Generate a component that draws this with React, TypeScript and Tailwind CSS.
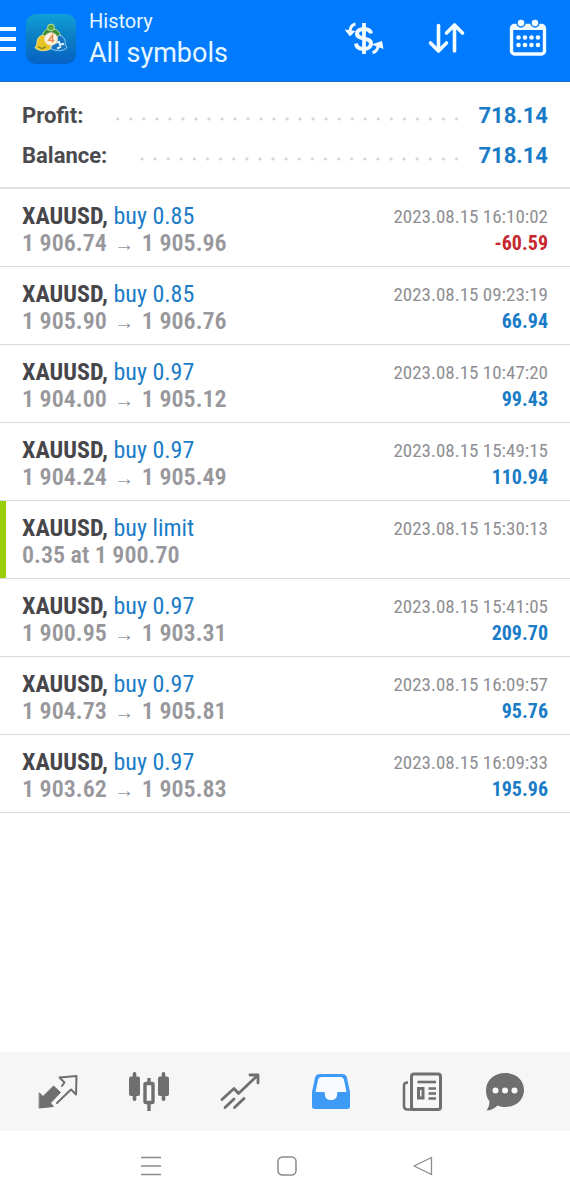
type Deal = {
  id: number;
  symbol: string;
  action: string;
  from?: string;
  to?: string;
  note?: string;
  time: string;
  profit?: string;
};

const DEALS: Deal[] = [
  { id: 1, symbol: "XAUUSD", action: "buy 0.85", from: "1 906.74", to: "1 905.96", time: "2023.08.15 16:10:02", profit: "-60.59" },
  { id: 2, symbol: "XAUUSD", action: "buy 0.85", from: "1 905.90", to: "1 906.76", time: "2023.08.15 09:23:19", profit: "66.94" },
  { id: 3, symbol: "XAUUSD", action: "buy 0.97", from: "1 904.00", to: "1 905.12", time: "2023.08.15 10:47:20", profit: "99.43" },
  { id: 4, symbol: "XAUUSD", action: "buy 0.97", from: "1 904.24", to: "1 905.49", time: "2023.08.15 15:49:15", profit: "110.94" },
  { id: 5, symbol: "XAUUSD", action: "buy limit", note: "0.35 at 1 900.70", time: "2023.08.15 15:30:13" },
  { id: 6, symbol: "XAUUSD", action: "buy 0.97", from: "1 900.95", to: "1 903.31", time: "2023.08.15 15:41:05", profit: "209.70" },
  { id: 7, symbol: "XAUUSD", action: "buy 0.97", from: "1 904.73", to: "1 905.81", time: "2023.08.15 16:09:57", profit: "95.76" },
  { id: 8, symbol: "XAUUSD", action: "buy 0.97", from: "1 903.62", to: "1 905.83", time: "2023.08.15 16:09:33", profit: "195.96" },
];

const SUMMARY = [
  { label: "Profit:", value: "718.14" },
  { label: "Balance:", value: "718.14" },
];

function MenuIcon() {
  return (
    <svg width="16" height="26" viewBox="0 0 16 26" fill="#f2fbff" aria-hidden="true">
      <path d="M0 1h16v4H0zM0 11h16v4H0zM0 21h16v4H0z" />
    </svg>
  );
}

function AppLogo() {
  return (
    <svg width="50" height="50" viewBox="0 0 50 52" preserveAspectRatio="none" aria-hidden="true">
      <defs>
        <linearGradient id="tile" x1="0" y1="0" x2="0" y2="1">
          <stop offset="0" stopColor="#109fd6" />
          <stop offset="0.45" stopColor="#0b7fc4" />
          <stop offset="1" stopColor="#0661c4" />
        </linearGradient>
      </defs>
      <rect width="50" height="52" rx="10" fill="url(#tile)" />
      <path d="M25 15c6 0 10 5 10 10l-10 5-9-5c0-5 3-10 9-10Z" fill="#3f8f3a" stroke="#b7dc8a" strokeWidth="1" />
      <circle cx="25" cy="14" r="3.500" fill="#5aa53c" stroke="#c4e2a4" strokeWidth="1" />
      <path d="M17 22c-5 1-6 5-6 8 0 2-1 4-2 5 4 4 11 4 16 1l-1-9Z" fill="#e8c425" stroke="#f6e88c" strokeWidth="1" />
      <path d="M33 22c5 1 7 6 6 9l2 4c-4 4-11 4-16 1l2-8Z" fill="#1673c4" stroke="#8fd0f0" strokeWidth="1" />
      <path d="m29 30 4-1 1 3 4-1M31 36l4-2" fill="none" stroke="#d6f2ff" strokeWidth="2" />
      <path d="m12 34 4 2 4-2" fill="none" stroke="#8b8a20" strokeWidth="1.500" />
      <circle cx="25" cy="26" r="6.500" fill="#fff6e6" stroke="#f0d6b0" strokeWidth="1" />
      <path d="M26.500 30v-8l-4 5.500h6" fill="none" stroke="#e58a4a" strokeWidth="1.500" />
    </svg>
  );
}

function CurrencyIcon() {
  return (
    <svg width="40" height="40" viewBox="0 0 40 40" fill="none" stroke="#f2fbff" aria-hidden="true">
      <path d="M27 14.500c-.5-3-3-4.500-7-4.500-4 0-7 1.800-7 4.800 0 6.400 14 3.200 14 9.700 0 3.200-3 5.500-7.500 5.500s-7-1.700-7.500-5.500" strokeWidth="4" />
      <path d="M20 4v31" strokeWidth="3.800" />
      <path d="M11.500 5C8.500 5.500 6.500 8 6 12" strokeWidth="3" />
      <path d="M.5 10.500 11.500 12 6 17.500Z" fill="#f2fbff" stroke="none" />
      <path d="M28.500 33.500c3.500-.5 5.500-3.500 6-8" strokeWidth="3" />
      <path d="m27.500 25.500 10.500-3.500 1.500 8Z" fill="#f2fbff" stroke="none" />
    </svg>
  );
}

function SortIcon() {
  return (
    <svg width="40" height="40" viewBox="0 0 40 40" fill="none" stroke="#f2fbff" strokeWidth="3.600" strokeLinecap="round" strokeLinejoin="round" aria-hidden="true">
      <path d="M12.500 6.500v25M4.500 24l8 8 8-8" />
      <path d="M28.500 32V6.500M20.500 14l8-8 8 8" />
    </svg>
  );
}

function CalendarIcon() {
  return (
    <svg width="40" height="40" viewBox="0 0 40 40" aria-hidden="true">
      <rect x="3.500" y="6.500" width="33" height="28.500" rx="3" fill="none" stroke="#f2fbff" strokeWidth="3.400" />
      <path d="M3 6h34v5H3z" fill="#f2fbff" />
      <g fill="#f2fbff" stroke="#0a7cf5" strokeWidth="1.500">
        <circle cx="13" cy="4" r="4" />
        <circle cx="27" cy="4" r="4" />
      </g>
      <g fill="#f2fbff">
        {[10.5, 17, 23.5, 30].map((x) => (
          <g key={x}>
            <circle cx={x} cy="18.500" r="2.300" />
            <circle cx={x} cy="26" r="2.300" />
          </g>
        ))}
      </g>
    </svg>
  );
}

function QuotesIcon() {
  return (
    <svg width="40" height="40" viewBox="0 0 40 40" stroke="#6f6f6f" strokeLinejoin="round" strokeLinecap="round" aria-hidden="true">
      <path d="M1.500 21 5 24.500 15.500 14 22.500 20.500 12.500 31 15.500 34.500 1.500 36Z" fill="#6f6f6f" />
      <path d="m24 14 2.500-3.500-5-5L38.500 4 38 22.500 33 17.500 19 31" fill="none" strokeWidth="2" />
    </svg>
  );
}

function ChartIcon() {
  return (
    <svg width="40" height="40" viewBox="0 0 40 40" fill="#6f6f6f" aria-hidden="true">
      <rect x="0" y="4.500" width="11" height="19.500" rx="2" />
      <rect x="3.700" y="0" width="3.600" height="29" rx="1.700" />
      <rect x="29" y="4.500" width="11" height="19.500" rx="2" />
      <rect x="32.700" y="0" width="3.600" height="29" rx="1.700" />
      <rect x="16" y="11.500" width="8" height="19" rx="1" fill="none" stroke="#6f6f6f" strokeWidth="3.400" />
      <path d="M18.300 6h3.400v5h-3.400zM18.300 31h3.400v8h-3.400z" />
    </svg>
  );
}

function TradeIcon() {
  return (
    <svg width="40" height="40" viewBox="0 0 40 40" fill="none" stroke="#6f6f6f" strokeWidth="2.800" strokeLinecap="round" strokeLinejoin="round" aria-hidden="true">
      <path d="M2 27.500 14 16.500l4.500 5L37 4" />
      <path d="M30 3h8v8" />
      <path d="M5 35.500l9-8.500M14.500 35.500 24 26.500" />
    </svg>
  );
}

function HistoryIcon() {
  return (
    <svg width="40" height="40" viewBox="0 0 40 40" aria-hidden="true">
      <path d="M9 2h22c2.500 0 4 1 4.800 3L39 20v14.500c0 1.500-1 2.500-2.500 2.500h-33C2 37 1 36 1 34.500V20L4.200 5C5 3 6.500 2 9 2Z" fill="#3d9af5" />
      <path d="M11 5h18c2.500 0 3.500 1 4 3L35.500 20h-8c-1.500 0-1.500 1-1.500 3 0 3-2.500 5-6 5s-6-2-6-5c0-2 0-3-1.500-3h-8L7 8c.5-2 1.500-3 4-3Z" fill="#f8fbff" />
    </svg>
  );
}

function NewsIcon() {
  return (
    <svg width="40" height="40" viewBox="0 0 40 40" fill="none" stroke="#6f6f6f" aria-hidden="true">
      <rect x="9.500" y="2" width="29" height="35.500" rx="2.500" strokeWidth="3" />
      <path d="M6 10.500c-3 0-4 1-4 3.500v20c0 2.500 1 3.500 3.500 3.500H12c-2 0-2.500-1.500-2.500-3.500" strokeWidth="2.600" />
      <path d="M15.500 10h18.500" strokeWidth="2.600" />
      <rect x="16.500" y="16.500" width="4.500" height="9.500" strokeWidth="3" />
      <path d="M26.500 16.500H34M26.500 21.500H34M26.500 26.500H34" strokeWidth="2.600" />
    </svg>
  );
}

function ChatIcon() {
  return (
    <svg width="40" height="40" viewBox="0 0 40 40" aria-hidden="true">
      <path d="M20.500 1C31 1 39 8 39 18S31 35 20.500 35c-3 0-5.500-.6-7.800-1.600C9.500 36.500 5 38.500 1.500 38.500c2.200-3 3.200-6.500 2.800-9.500C2 26 1 22.500 1 18.500 1 8 9.500 1 20.500 1Z" fill="#6f6f6f" />
      <g fill="#f8f8f8">
        <circle cx="10.500" cy="18.500" r="3" />
        <circle cx="20" cy="18.500" r="3" />
        <circle cx="29.500" cy="18.500" r="3" />
      </g>
    </svg>
  );
}

const TABS = [
  { label: "Quotes", icon: <QuotesIcon /> },
  { label: "Charts", icon: <ChartIcon /> },
  { label: "Trade", icon: <TradeIcon /> },
  { label: "History", icon: <HistoryIcon /> },
  { label: "News", icon: <NewsIcon /> },
  { label: "Messages", icon: <ChatIcon /> },
];

function Header() {
  return (
    <header className="flex items-center border-b border-[#1c6fc4] bg-[#007bff] pt-[5px] pr-[22px] pb-2 text-[#e6f7ff]">
      <button type="button" aria-label="Menu">
        <MenuIcon />
      </button>
      <div className="ml-2.5 shrink-0">
        <AppLogo />
      </div>
      <div className="ml-[13px] flex-1 py-0.5 font-['Roboto',sans-serif]">
        <p className="text-[20px] leading-7">History</p>
        <h1 className="text-[27px] leading-9">All symbols</h1>
      </div>
      <div className="flex gap-[42px]">
        <button type="button" aria-label="Symbols">
          <CurrencyIcon />
        </button>
        <button type="button" aria-label="Sort">
          <SortIcon />
        </button>
        <button type="button" aria-label="Period">
          <CalendarIcon />
        </button>
      </div>
    </header>
  );
}

function DealRow({ deal }: { deal: Deal }) {
  const pending = !deal.profit;

  return (
    <li className="border-b border-[#d9d9d9]">
      <div
        className={`flex justify-between border-l-[6px] pt-3.5 pr-[22px] pb-[9px] pl-4 leading-[27px] ${
          pending ? "border-[#9acd0a]" : "border-transparent"
        }`}
      >
        <div className="text-[24px] leading-[27px]">
          <p className="font-bold text-[#47474b]">
            {deal.symbol},{" "}
            <span className="font-normal text-[#1a7cc7]">{deal.action}</span>
          </p>
          <p className="font-semibold text-[#98989c]">
            {deal.note ?? (
              <>
                {deal.from}{" "}
                <span className="mx-0.5 font-['Liberation_Sans',sans-serif] text-[20px] leading-none font-normal">→</span>{" "}
                {deal.to}
              </>
            )}
          </p>
        </div>
        <div className="text-right">
          <p className="text-[19px] leading-[27px] text-[#8f8f93]">{deal.time}</p>
          {deal.profit ? (
            <p
              className={`text-[20px] leading-[27px] font-bold ${
                deal.profit.startsWith("-") ? "text-[#c5272d]" : "text-[#1a7cc7]"
              }`}
            >
              {deal.profit}
            </p>
          ) : null}
        </div>
      </div>
    </li>
  );
}

export default function App() {
  return (
    <div className="flex min-h-screen flex-col bg-white font-['Roboto_Condensed','Liberation_Sans_Narrow',sans-serif]">
      <Header />

      <main className="flex-1">
        <dl className="border-b-2 border-[#e2e2e2] px-[22px] pt-3.5 pb-[11px] font-['Roboto',sans-serif] text-[22px] leading-10 font-bold">
          {SUMMARY.map((item) => (
            <div key={item.label} className="flex items-center">
              <dt className="text-[#4b4b4f]">{item.label}</dt>
              <dd className="flex flex-1 items-center text-[#1a7cc7]">
                <span className="mt-1.5 mr-4 ml-7 h-1 flex-1 bg-[radial-gradient(circle,#d4d4d4_1px,transparent_2px)] bg-[length:13px_4px] bg-right bg-repeat-round" />
                {item.value}
              </dd>
            </div>
          ))}
        </dl>

        <ul>
          {DEALS.map((deal) => (
            <DealRow key={deal.id} deal={deal} />
          ))}
        </ul>
      </main>

      <nav className="grid h-[79px] grid-cols-[repeat(5,6fr)_5fr] items-center bg-[#f6f6f6] pr-[27px] pl-[13px]">
        {TABS.map((tab) => (
          <button key={tab.label} type="button" aria-label={tab.label} className="flex justify-center">
            {tab.icon}
          </button>
        ))}
      </nav>

      <div className="flex h-[69px] items-center justify-center gap-[116px] pl-1">
        <button type="button" aria-label="Recent apps">
          <svg width="20" height="20" viewBox="0 0 20 20" fill="none" stroke="#8a8a8a" strokeWidth="1.500">
            <path d="M0 1.500h20M0 10h20M0 18.500h20" />
          </svg>
        </button>
        <button type="button" aria-label="Home">
          <svg width="20" height="20" viewBox="0 0 20 20" fill="none" stroke="#8a8a8a" strokeWidth="1.500">
            <rect x="1" y="1" width="18" height="18" rx="4.500" />
          </svg>
        </button>
        <button type="button" aria-label="Back">
          <svg width="20" height="20" viewBox="0 0 20 20" fill="none" stroke="#8a8a8a" strokeWidth="1.300" strokeLinejoin="round">
            <path d="M18.500 1.500v17L1 10Z" />
          </svg>
        </button>
      </div>
    </div>
  );
}
